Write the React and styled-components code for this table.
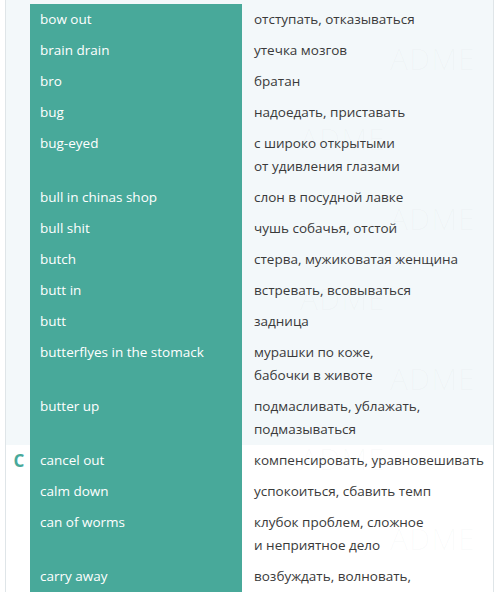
import React from "react";
import styled, { createGlobalStyle } from "styled-components";

const sections = [
  {
    letter: "",
    tint: true,
    rows: [
      ["bow out", ["отступать, отказываться"]],
      ["brain drain", ["утечка мозгов"]],
      ["bro", ["братан"]],
      ["bug", ["надоедать, приставать"]],
      ["bug-eyed", ["с широко открытыми", "от удивления глазами"]],
      ["bull in chinas shop", ["слон в посудной лавке"]],
      ["bull shit", ["чушь собачья, отстой"]],
      ["butch", ["стерва, мужиковатая женщина"]],
      ["butt in", ["встревать, всовываться"]],
      ["butt", ["задница"]],
      ["butterflyes in the stomack", ["мурашки по коже,", "бабочки в животе"]],
      ["butter up", ["подмасливать, ублажать,", "подмазываться"]],
    ],
  },
  {
    letter: "C",
    tint: false,
    rows: [
      ["cancel out", ["компенсировать, уравновешивать"]],
      ["calm down", ["успокоиться, сбавить темп"]],
      ["can of worms", ["клубок проблем, сложное", "и неприятное дело"]],
      ["carry away", ["возбуждать, волновать,"]],
    ],
  },
];

const marks = [
  [390, 38],
  [300, 118],
  [390, 198],
  [300, 278],
  [390, 358],
  [300, 438],
  [390, 518],
];

const GlobalStyle = createGlobalStyle`
  html, body {
    margin: 0;
    padding: 0;
    background: #ffffff;
  }
  body {
    font-family: "Open Sans", "Noto Sans", sans-serif;
    overflow: hidden;
  }
`;

const Page = styled.div`
  position: relative;
  width: 500px;
  height: 593px;
  overflow: hidden;
  background: #ffffff;
`;

const Table = styled.div`
  margin: -1px 6px 0 5px;
  border-left: 1px solid #dfe5e8;
  border-right: 1px solid #dfe5e8;
  display: flex;
  flex-direction: column;
`;

const Section = styled.div`
  display: grid;
  grid-template-columns: 24px 212px 1fr;
  background: ${(p) => (p.$tint ? "#f3f8fa" : "#ffffff")};
  padding-top: ${(p) => (p.$first ? "5px" : "0")};
`;

const Letter = styled.div`
  grid-column: 1;
  grid-row: 1 / span 20;
  color: #48a99a;
  font-size: 17px;
  font-weight: 700;
  text-align: center;
  line-height: 31px;
  padding-left: 2px;
`;

const Term = styled.div`
  grid-column: 2;
  background: #48a99a;
  color: #ffffff;
  font-size: 13.5px;
  line-height: 23px;
  padding: 4px 10px;
  white-space: nowrap;
`;

const Meaning = styled.div`
  grid-column: 3;
  color: #3a3a3a;
  font-size: 13.5px;
  line-height: 23px;
  padding: 4px 0 4px 12px;
  white-space: nowrap;
`;

const Watermark = styled.div`
  position: absolute;
  inset: 0;
  pointer-events: none;
`;

const Mark = styled.span`
  position: absolute;
  font-family: "Open Sans", sans-serif;
  font-size: 30px;
  font-weight: 300;
  letter-spacing: 1px;
  color: rgba(120, 130, 130, 0.035);
`;

export default function App() {
  return (
    <Page>
      <GlobalStyle />
      <Table>
        {sections.map((s, si) => (
          <Section key={si} $tint={s.tint} $first={si === 0}>
            <Letter>{s.letter}</Letter>
            {s.rows.map(([term, lines]) => (
              <React.Fragment key={term}>
                <Term>{term}</Term>
                <Meaning>
                  {lines.map((l) => (
                    <div key={l}>{l}</div>
                  ))}
                </Meaning>
              </React.Fragment>
            ))}
          </Section>
        ))}
      </Table>
      <Watermark>
        {marks.map(([x, y]) => (
          <Mark key={`${x}-${y}`} style={{ left: x, top: y }}>
            ADME
          </Mark>
        ))}
      </Watermark>
    </Page>
  );
}
